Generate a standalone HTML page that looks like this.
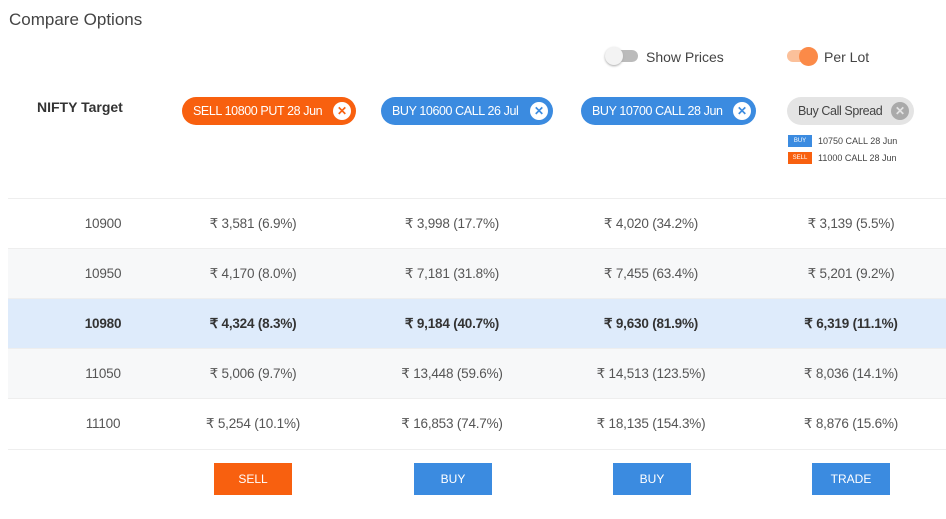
<!DOCTYPE html><html><head><style>
body{margin:0;width:946px;height:519px;background:#fff;font-family:"Liberation Sans",sans-serif;position:relative;overflow:hidden;color:#444}
.a{position:absolute}
.pill{position:absolute;height:28px;border-radius:14px;color:#fff;font-size:12.5px;letter-spacing:-0.4px;line-height:28px;padding-left:11px;box-sizing:border-box;white-space:nowrap}
.x{position:absolute;right:5px;top:5px;width:18px;height:18px;border-radius:9px;background:#fff;text-align:center;line-height:18px;font-size:12px;font-weight:bold;letter-spacing:0}
.row{position:absolute;left:8px;width:938px;height:50px;border-top:1px solid #eee;font-size:13.5px;letter-spacing:-0.2px;line-height:50px;color:#555}
.row span{position:absolute;width:200px;margin-left:-100px;text-align:center}
.btn{position:absolute;top:463px;width:78px;height:32px;color:#fff;font-size:12px;text-align:center;line-height:32px}
</style></head><body>
<div class="a" style="left:9px;top:10px;font-size:17px;color:#444">Compare Options</div>
<div class="a" style="left:608px;top:50px;width:30px;height:12px;border-radius:6px;background:#bbb"></div>
<div class="a" style="left:605px;top:47px;width:18px;height:18px;border-radius:9px;background:#f3f3f3;box-shadow:0 1px 2px #aaa"></div>
<div class="a" style="left:646px;top:49px;font-size:14px">Show Prices</div>
<div class="a" style="left:787px;top:50px;width:30px;height:12px;border-radius:6px;background:#fbc09a"></div>
<div class="a" style="left:799px;top:47px;width:19px;height:19px;border-radius:10px;background:#fb8a48"></div>
<div class="a" style="left:824px;top:49px;font-size:14px">Per Lot</div>
<div class="a" style="left:37px;top:99px;font-size:14px;font-weight:bold;color:#333">NIFTY Target</div>
<div class="pill" style="left:182px;top:97px;width:174px;background:#f8600f">SELL 10800 PUT 28 Jun<div class="x" style="color:#f8600f">✕</div></div>
<div class="pill" style="left:381px;top:97px;width:172px;background:#3b8be0">BUY 10600 CALL 26 Jul<div class="x" style="color:#3b8be0">✕</div></div>
<div class="pill" style="left:581px;top:97px;width:175px;background:#3b8be0">BUY 10700 CALL 28 Jun<div class="x" style="color:#3b8be0">✕</div></div>
<div class="pill" style="left:787px;top:97px;width:127px;background:#e4e4e4;color:#444">Buy Call Spread<div class="x" style="background:#aaa;color:#e4e4e4">✕</div></div>
<div class="a" style="left:788px;top:135px;width:24px;height:12px;background:#3b8be0;color:#fff;font-size:6px;text-align:center;line-height:12px">BUY</div>
<div class="a" style="left:818px;top:135px;font-size:9px;line-height:12px">10750 CALL 28 Jun</div>
<div class="a" style="left:788px;top:152px;width:24px;height:12px;background:#f8600f;color:#fff;font-size:6px;text-align:center;line-height:12px">SELL</div>
<div class="a" style="left:818px;top:152px;font-size:9px;line-height:12px">11000 CALL 28 Jun</div>
<div class="row" style="top:198px;background:#fff"><span style="left:95px">10900</span><span style="left:245px">₹ 3,581 (6.9%)</span><span style="left:444px">₹ 3,998 (17.7%)</span><span style="left:643px">₹ 4,020 (34.2%)</span><span style="left:843px">₹ 3,139 (5.5%)</span></div>
<div class="row" style="top:248px;background:#f7f8f9"><span style="left:95px">10950</span><span style="left:245px">₹ 4,170 (8.0%)</span><span style="left:444px">₹ 7,181 (31.8%)</span><span style="left:643px">₹ 7,455 (63.4%)</span><span style="left:843px">₹ 5,201 (9.2%)</span></div>
<div class="row" style="top:298px;background:#deebfb;font-weight:bold;color:#333"><span style="left:95px">10980</span><span style="left:245px">₹ 4,324 (8.3%)</span><span style="left:444px">₹ 9,184 (40.7%)</span><span style="left:643px">₹ 9,630 (81.9%)</span><span style="left:843px">₹ 6,319 (11.1%)</span></div>
<div class="row" style="top:348px;background:#f7f8f9"><span style="left:95px">11050</span><span style="left:245px">₹ 5,006 (9.7%)</span><span style="left:444px">₹ 13,448 (59.6%)</span><span style="left:643px">₹ 14,513 (123.5%)</span><span style="left:843px">₹ 8,036 (14.1%)</span></div>
<div class="row" style="top:398px;background:#fff;border-bottom:1px solid #eee"><span style="left:95px">11100</span><span style="left:245px">₹ 5,254 (10.1%)</span><span style="left:444px">₹ 16,853 (74.7%)</span><span style="left:643px">₹ 18,135 (154.3%)</span><span style="left:843px">₹ 8,876 (15.6%)</span></div>
<div class="btn" style="left:214px;background:#f8600f">SELL</div>
<div class="btn" style="left:414px;background:#3b8be0">BUY</div>
<div class="btn" style="left:613px;background:#3b8be0">BUY</div>
<div class="btn" style="left:812px;background:#3b8be0">TRADE</div>
</body></html>
